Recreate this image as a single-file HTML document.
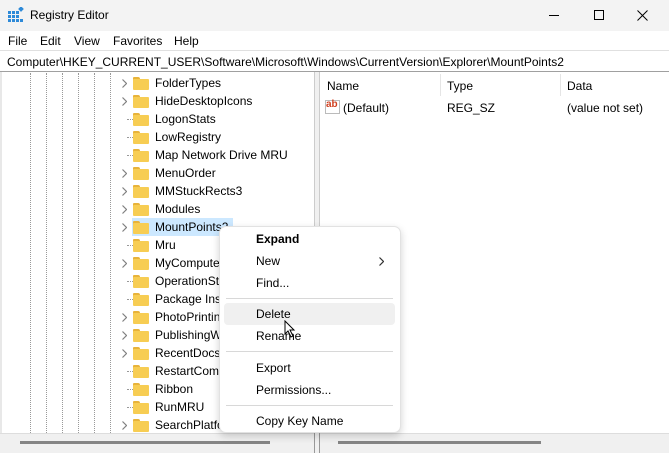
<!DOCTYPE html><html><head><style>
*{margin:0;padding:0;box-sizing:border-box}
body{width:669px;height:453px;overflow:hidden;background:#fff;font-family:"Liberation Sans",sans-serif;font-size:12px;color:#000;position:relative}
.a{position:absolute;white-space:nowrap}
.dot{position:absolute;top:73px;height:360px;border-left:1px dotted #999}
.row{position:absolute;left:0;height:18px;width:315px}
.chev{position:absolute;left:122px;top:5px;width:5px;height:9px}
.hl{position:absolute;left:127px;top:9px;width:6px;border-top:1px dotted #999}
.fold{position:absolute;left:133px;top:3px;width:16px;height:13px}
.fold:before{content:"";position:absolute;left:0;top:0;width:7px;height:4px;background:#e8b33a;border-radius:1px 2px 0 0}
.fold:after{content:"";position:absolute;left:0;top:2px;width:16px;height:11px;background:#f7cd53;border-radius:1px}
.lbl{position:absolute;left:155px;top:2px}
.mi{position:absolute;left:256px;font-size:12px}
.sep{position:absolute;left:226px;width:167px;height:1px;background:#d8d8d8}
</style></head><body>
<svg width="0" height="0" style="position:absolute"><defs><symbol id="c" viewBox="0 0 5 9"><path d="M0.5 0.5 L4.5 4.5 L0.5 8.5" fill="none" stroke="#808080" stroke-width="1.2"/></symbol></defs></svg>
<div class="a" style="left:0;top:0;width:669px;height:31px;background:#f3f3f3"></div>
<svg class="a" style="left:8px;top:7px" width="16" height="16"><g fill="#2e8ad8"><rect x="0" y="4" width="3" height="3"/><rect x="4" y="4" width="3" height="3"/><rect x="0" y="8" width="3" height="3"/><rect x="4" y="8" width="3" height="3"/><rect x="8" y="8" width="3" height="3"/><rect x="0" y="12" width="3" height="3"/><rect x="4" y="12" width="3" height="3"/><rect x="8" y="12" width="3" height="3"/><rect x="12" y="12" width="3" height="3"/><rect x="8" y="4" width="3" height="3"/><rect x="11" y="0" width="4" height="4" transform="rotate(45 13 2)"/></g></svg>
<div class="a" style="left:30px;top:8px;font-size:12px">Registry Editor</div>
<div class="a" style="left:549px;top:15px;width:10px;height:1px;background:#000"></div>
<div class="a" style="left:594px;top:10px;width:10px;height:10px;border:1px solid #000"></div>
<svg class="a" style="left:637px;top:10px" width="11" height="11"><path d="M0.5 0.5 L10.5 10.5 M10.5 0.5 L0.5 10.5" stroke="#000" stroke-width="1"/></svg>
<div class="a" style="left:0;top:31px;width:669px;height:19px;background:#fff"></div>
<div class="a" style="left:8px;top:34px">File</div>
<div class="a" style="left:40px;top:34px">Edit</div>
<div class="a" style="left:74px;top:34px">View</div>
<div class="a" style="left:113px;top:34px">Favorites</div>
<div class="a" style="left:174px;top:34px">Help</div>
<div class="a" style="left:0;top:50px;width:669px;height:22px;border-top:1px solid #e0e0e0;border-bottom:1px solid #a0a0a0"></div>
<div class="a" style="left:7px;top:55px">Computer\HKEY_CURRENT_USER\Software\Microsoft\Windows\CurrentVersion\Explorer\MountPoints2</div>
<div class="a" style="left:0;top:72px;width:2px;height:381px;background:#e8e8e8"></div>
<div class="a" style="left:314px;top:72px;width:6px;height:381px;background:#f0f0f0;border-left:1px solid #ccc;border-right:1px solid #ccc"></div>
<div class="dot" style="left:30px"></div><div class="dot" style="left:46px"></div><div class="dot" style="left:62px"></div><div class="dot" style="left:78px"></div><div class="dot" style="left:94px"></div><div class="dot" style="left:110px"></div>
<div class="a" style="left:132px;top:218px;width:101px;height:18px;background:#cce8ff"></div>
<div class="row" style="top:74px"><svg class="chev"><use href="#c"/></svg><span class="fold"></span><span class="lbl">FolderTypes</span></div>
<div class="row" style="top:92px"><svg class="chev"><use href="#c"/></svg><span class="fold"></span><span class="lbl">HideDesktopIcons</span></div>
<div class="row" style="top:110px"><span class="hl"></span><span class="fold"></span><span class="lbl">LogonStats</span></div>
<div class="row" style="top:128px"><span class="hl"></span><span class="fold"></span><span class="lbl">LowRegistry</span></div>
<div class="row" style="top:146px"><span class="hl"></span><span class="fold"></span><span class="lbl">Map Network Drive MRU</span></div>
<div class="row" style="top:164px"><svg class="chev"><use href="#c"/></svg><span class="fold"></span><span class="lbl">MenuOrder</span></div>
<div class="row" style="top:182px"><svg class="chev"><use href="#c"/></svg><span class="fold"></span><span class="lbl">MMStuckRects3</span></div>
<div class="row" style="top:200px"><svg class="chev"><use href="#c"/></svg><span class="fold"></span><span class="lbl">Modules</span></div>
<div class="row" style="top:218px"><svg class="chev"><use href="#c"/></svg><span class="fold"></span><span class="lbl">MountPoints2</span></div>
<div class="row" style="top:236px"><span class="hl"></span><span class="fold"></span><span class="lbl">Mru</span></div>
<div class="row" style="top:254px"><svg class="chev"><use href="#c"/></svg><span class="fold"></span><span class="lbl">MyComputer</span></div>
<div class="row" style="top:272px"><span class="hl"></span><span class="fold"></span><span class="lbl">OperationStatus</span></div>
<div class="row" style="top:290px"><span class="hl"></span><span class="fold"></span><span class="lbl">Package Installation</span></div>
<div class="row" style="top:308px"><svg class="chev"><use href="#c"/></svg><span class="fold"></span><span class="lbl">PhotoPrinting</span></div>
<div class="row" style="top:326px"><svg class="chev"><use href="#c"/></svg><span class="fold"></span><span class="lbl">PublishingWizard</span></div>
<div class="row" style="top:344px"><svg class="chev"><use href="#c"/></svg><span class="fold"></span><span class="lbl">RecentDocs</span></div>
<div class="row" style="top:362px"><span class="hl"></span><span class="fold"></span><span class="lbl">RestartCommands</span></div>
<div class="row" style="top:380px"><span class="hl"></span><span class="fold"></span><span class="lbl">Ribbon</span></div>
<div class="row" style="top:398px"><span class="hl"></span><span class="fold"></span><span class="lbl">RunMRU</span></div>
<div class="row" style="top:416px"><svg class="chev"><use href="#c"/></svg><span class="fold"></span><span class="lbl">SearchPlatform</span></div>
<div class="a" style="left:0;top:433px;width:669px;height:20px;background:#f0f0f0;border-top:1px solid #ddd"></div>
<div class="a" style="left:20px;top:441px;width:250px;height:3px;background:#858585"></div>
<div class="a" style="left:338px;top:441px;width:203px;height:3px;background:#858585"></div>
<div class="a" style="left:314px;top:433px;width:6px;height:20px;border-left:1px solid #999;border-right:1px solid #999;background:#f0f0f0"></div>
<div class="a" style="left:327px;top:79px">Name</div>
<div class="a" style="left:447px;top:79px">Type</div>
<div class="a" style="left:567px;top:79px">Data</div>
<div class="a" style="left:440px;top:74px;width:1px;height:22px;background:#e5e5e5"></div>
<div class="a" style="left:560px;top:74px;width:1px;height:22px;background:#e5e5e5"></div>
<div class="a" style="left:325px;top:100px;width:15px;height:14px;border:1px solid #bbb;background:#fff"></div>
<div class="a" style="left:326px;top:99px;font-size:10px;font-weight:bold;color:#d04020">ab</div>
<div class="a" style="left:343px;top:101px">(Default)</div>
<div class="a" style="left:447px;top:101px">REG_SZ</div>
<div class="a" style="left:567px;top:101px">(value not set)</div>
<div class="a" style="left:219px;top:226px;width:182px;height:207px;background:#fff;border:1px solid #e2e2e2;border-radius:7px;box-shadow:0 3px 8px rgba(0,0,0,.18)"></div>
<div class="mi" style="top:232px;font-weight:bold">Expand</div>
<div class="mi" style="top:254px">New</div>
<svg class="a" style="left:379px;top:257px" width="5" height="9"><path d="M0.5 0.5 L4.5 4.5 L0.5 8.5" fill="none" stroke="#333" stroke-width="1.2"/></svg>
<div class="mi" style="top:276px">Find...</div>
<div class="sep" style="top:298px"></div>
<div class="a" style="left:224px;top:303px;width:171px;height:22px;background:#f0f0f0;border-radius:4px"></div>
<div class="mi" style="top:307px">Delete</div>
<div class="mi" style="top:329px">Rename</div>
<svg class="a" style="left:284px;top:320px" width="12" height="18"><path d="M1 1 L1 14 L4 11 L7 17 L9 16 L6 10 L10 10 Z" fill="#fff" stroke="#000" stroke-width="1"/></svg>
<div class="sep" style="top:351px"></div>
<div class="mi" style="top:361px">Export</div>
<div class="mi" style="top:383px">Permissions...</div>
<div class="sep" style="top:405px"></div>
<div class="mi" style="top:414px">Copy Key Name</div>
</body></html>
